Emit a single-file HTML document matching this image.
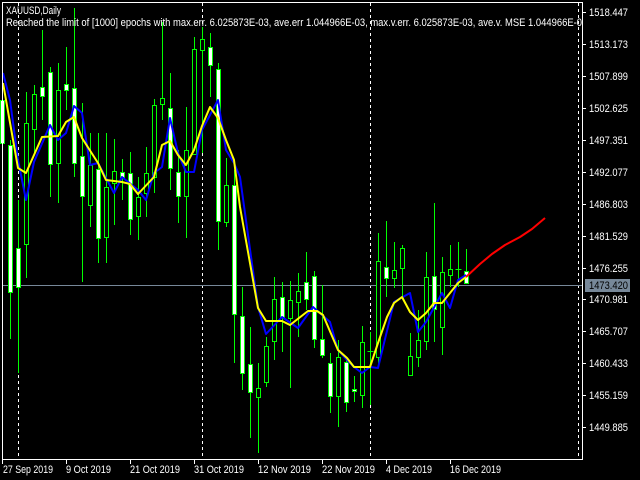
<!DOCTYPE html>
<html><head><meta charset="utf-8"><style>
html,body{margin:0;padding:0;background:#000;width:640px;height:480px;overflow:hidden}
svg{position:absolute;left:0;top:0}
</style></head><body>
<svg id="s" width="640" height="480" xmlns="http://www.w3.org/2000/svg" shape-rendering="crispEdges">
<rect x="0" y="0" width="640" height="480" fill="#000"/>
<g stroke="#fff" stroke-width="1" stroke-dasharray="3,3" fill="none">
<line x1="18.5" y1="3" x2="18.5" y2="459"/>
<line x1="202.5" y1="3" x2="202.5" y2="459"/>
<line x1="370.5" y1="3" x2="370.5" y2="459"/>
<line x1="578.5" y1="3" x2="578.5" y2="459"/>
</g>
<line x1="2" y1="285.5" x2="582" y2="285.5" stroke="#778899"/>
<g id="c"></g>
<g fill="none" stroke-width="2" shape-rendering="auto" stroke-linejoin="round">
<polyline stroke="#0000ff" points="3,73 10,100 18,160 26,200 34,162 50,125 58,140 66,133 74,106 82,113 90,165 98,163 114,193 122,177 138,190 146,200 154,173 162,167 170,118 178,153 186,172 194,172 202,130 218,100 226,150 234,163 240,177 258,307 266,334 282,317 298,328 313,307 330,322 338,350 347,360 354,367 362,373 370,367 378,368 394,302 410,293 418,332 426,322 442,293 450,308 458,280 466,275"/>
<polyline stroke="#ffff00" points="3,83 18,168 26,173 42,137 58,136 66,122 74,117 82,138 98,163 106,180 122,182 130,184 138,194 154,177 162,145 170,141 178,155 186,165 194,150 202,126 210,107 218,118 226,140 234,160 240,207 258,308 266,321 282,321 290,325 308,311 317,311 323,315 338,350 347,358 354,367 370,367 378,343 387,317 394,303 402,297 410,312 418,320 426,313 434,303 442,303 450,293 458,283 466,277"/>
<polyline stroke="#ff0000" points="466,277 480,264 492,254 505,245 520,237 532,229 545,218"/>
</g>
<g stroke="#fff" fill="none">
<line x1="2.5" y1="2" x2="2.5" y2="460"/>
<line x1="2" y1="2.5" x2="582" y2="2.5"/>
<line x1="582.5" y1="2" x2="582.5" y2="460"/>
<line x1="2" y1="459.5" x2="583" y2="459.5"/>
</g>
<g stroke="#fff" id="tk"></g>
<rect x="585" y="279" width="45" height="13" fill="#778899"/>
<g font-family="Liberation Sans, sans-serif" font-size="11" fill="#fff" lengthAdjust="spacingAndGlyphs">
<text x="589" y="16" textLength="39" lengthAdjust="spacingAndGlyphs">1518.447</text>
<text x="589" y="48" textLength="39" lengthAdjust="spacingAndGlyphs">1513.173</text>
<text x="589" y="80" textLength="39" lengthAdjust="spacingAndGlyphs">1507.899</text>
<text x="589" y="112" textLength="39" lengthAdjust="spacingAndGlyphs">1502.625</text>
<text x="589" y="144" textLength="39" lengthAdjust="spacingAndGlyphs">1497.351</text>
<text x="589" y="176" textLength="39" lengthAdjust="spacingAndGlyphs">1492.077</text>
<text x="589" y="208" textLength="39" lengthAdjust="spacingAndGlyphs">1486.803</text>
<text x="589" y="240" textLength="39" lengthAdjust="spacingAndGlyphs">1481.529</text>
<text x="589" y="272" textLength="39" lengthAdjust="spacingAndGlyphs">1476.255</text>
<text x="589" y="289" fill="#000" textLength="39" lengthAdjust="spacingAndGlyphs">1473.420</text>
<text x="589" y="303" textLength="39" lengthAdjust="spacingAndGlyphs">1470.981</text>
<text x="589" y="335" textLength="39" lengthAdjust="spacingAndGlyphs">1465.707</text>
<text x="589" y="367" textLength="39" lengthAdjust="spacingAndGlyphs">1460.433</text>
<text x="589" y="399" textLength="39" lengthAdjust="spacingAndGlyphs">1455.159</text>
<text x="589" y="431" textLength="39" lengthAdjust="spacingAndGlyphs">1449.885</text>
<text x="3" y="473" textLength="50" lengthAdjust="spacingAndGlyphs">27 Sep 2019</text>
<text x="66" y="473" textLength="45" lengthAdjust="spacingAndGlyphs">9 Oct 2019</text>
<text x="130" y="473" textLength="50" lengthAdjust="spacingAndGlyphs">21 Oct 2019</text>
<text x="194" y="473" textLength="50" lengthAdjust="spacingAndGlyphs">31 Oct 2019</text>
<text x="258" y="473" textLength="53" lengthAdjust="spacingAndGlyphs">12 Nov 2019</text>
<text x="322" y="473" textLength="53" lengthAdjust="spacingAndGlyphs">22 Nov 2019</text>
<text x="386" y="473" textLength="46" lengthAdjust="spacingAndGlyphs">4 Dec 2019</text>
<text x="450" y="473" textLength="51" lengthAdjust="spacingAndGlyphs">16 Dec 2019</text>
<text x="6" y="14" textLength="55" lengthAdjust="spacingAndGlyphs">XAUUSD,Daily</text>
<text x="6" y="26" textLength="576" lengthAdjust="spacingAndGlyphs">Reached the limit of [1000] epochs with max.err. 6.025873E-03, ave.err 1.044966E-03, max.v.err. 6.025873E-03, ave.v. MSE 1.044966E-0</text>
</g>
</svg>
<script>
var d=[[2,73,143,100,143,1],[10,140,339,145,292,1],[18,200,373,248,287,1],[26,92,278,123,244,0],[34,85,153,94,129,0],[42,30,120,87,96,1],[50,67,197,72,164,1],[58,63,203,90,163,0],[66,47,110,84,90,1],[74,8,177,88,163,1],[82,103,282,156,196,1],[90,133,227,165,205,0],[98,133,263,169,238,1],[106,133,263,187,237,0],[114,139,225,171,183,0],[122,159,200,172,177,1],[130,152,235,173,219,1],[138,177,240,197,216,0],[146,147,217,173,193,0],[154,99,193,105,177,0],[162,22,120,98,104,0],[170,73,190,108,168,1],[178,150,223,172,196,1],[186,107,238,150,196,0],[194,37,154,49,154,0],[202,27,153,39,50,0],[210,33,97,47,65,1],[218,63,250,69,221,1],[226,158,227,185,222,0],[234,170,363,185,314,1],[242,287,390,316,373,1],[250,327,438,364,392,1],[258,363,453,388,397,0],[266,337,387,346,382,0],[274,277,360,299,341,0],[282,282,352,297,317,1],[290,281,388,300,318,0],[298,273,337,291,302,0],[306,252,310,282,299,1],[314,271,348,276,339,1],[322,285,358,339,355,1],[330,353,413,363,396,1],[338,340,427,357,396,0],[346,357,412,362,402,1],[354,376,402,389,391,1],[362,326,408,342,395,0],[370,332,405,351,351,0],[378,233,365,261,357,0],[386,221,297,267,278,1],[394,242,288,270,278,0],[402,245,297,248,268,0],[410,333,375,356,375,0],[418,310,367,340,357,0],[426,252,350,277,341,0],[434,203,342,276,309,1],[442,257,355,272,327,0],[450,245,287,269,275,0],[458,242,287,269,269,0],[466,249,283,271,283,1]];
var g=document.getElementById('c'),h='';
d.forEach(function(c){var x=c[0]+0.5;
h+='<line x1="'+x+'" y1="'+c[1]+'" x2="'+x+'" y2="'+c[2]+'" stroke="#00ff00"/>';
var ht=c[4]-c[3];
if(ht<1){h+='<line x1="'+(x-3)+'" y1="'+(c[3]+.5)+'" x2="'+(x+3)+'" y2="'+(c[3]+.5)+'" stroke="#00ff00"/>';}
else h+='<rect x="'+(x-2)+'" y="'+(c[3]+.5)+'" width="4" height="'+ht+'" fill="'+(c[5]?'#fff':'#000')+'" stroke="#00ff00"/>';});
g.innerHTML=h;
var tk='';[12,44,76,108,140,172,204,236,268,299,331,363,395,427].forEach(function(y){tk+='<line x1="582" y1="'+(y+.5)+'" x2="586" y2="'+(y+.5)+'"/>';});
[2,66,130,194,258,322,386,450].forEach(function(x){tk+='<line x1="'+(x+.5)+'" y1="459" x2="'+(x+.5)+'" y2="464"/>';});
document.getElementById('tk').innerHTML=tk;
</script>
</body></html>
